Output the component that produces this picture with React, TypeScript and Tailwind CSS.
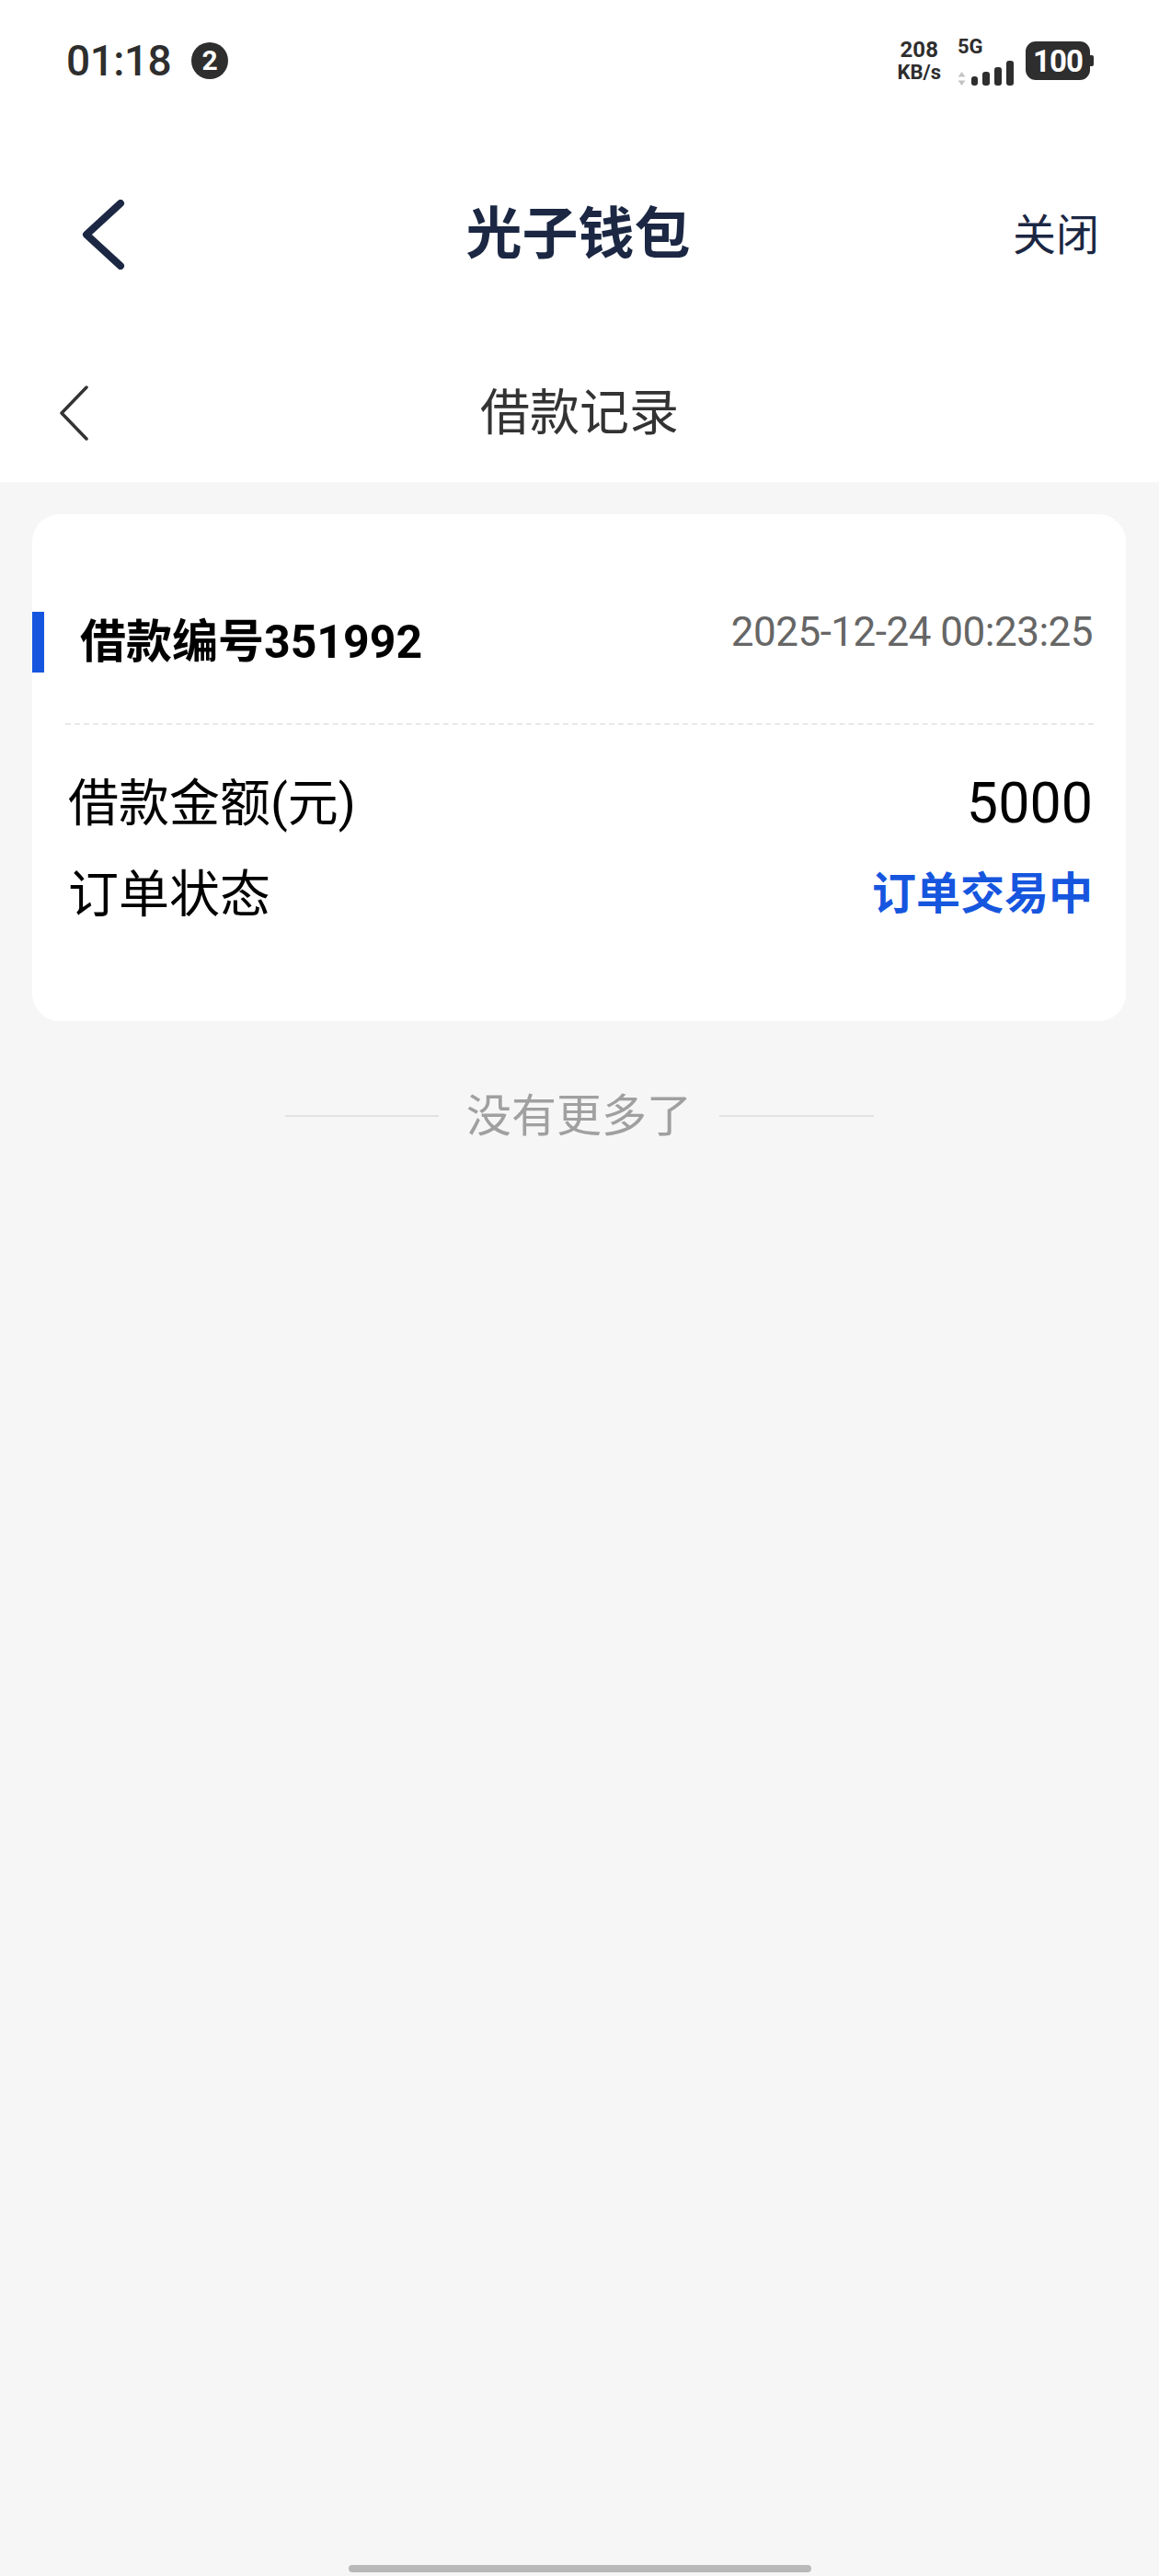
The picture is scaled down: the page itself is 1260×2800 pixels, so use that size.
import React from 'react';

const FONT = { fontFamily: 'Roboto, "Noto Sans CJK SC", sans-serif' };

function StatusBar() {
  return (
    <div className="h-[134px] flex items-center justify-between pl-[72px] pr-[71px] pb-[2px]">
      <div className="flex items-center gap-[22px]">
        <span className="text-[46px] font-medium leading-none text-[#2e2e2e] tracking-[-0.5px]">01:18</span>
        <span className="w-[40px] h-[40px] rounded-full bg-[#2e2e2e] text-white text-[30px] font-bold leading-none flex items-center justify-center">2</span>
      </div>
      <div className="flex items-center">
        <div className="flex flex-col items-center text-[#2e2e2e] font-bold leading-none">
          <span className="text-[24px]">208</span>
          <span className="text-[22px] mt-[2px]">KB/s</span>
        </div>
        <div className="flex flex-col ml-[18px]">
          <span className="text-[22px] font-bold leading-none text-[#2e2e2e]">5G</span>
          <div className="flex items-end mt-[4px] h-[27px]">
            <svg width="9" height="15" viewBox="0 0 9 15" className="mr-[6px]">
              <path d="M4.5 0 L8.5 5.5 H0.5 Z" fill="#c4c4c4" />
              <path d="M4.5 15 L8.5 9.5 H0.5 Z" fill="#c4c4c4" />
            </svg>
            <div className="flex items-end gap-[5px]">
              <div className="w-[7px] h-[10px] rounded-[3px] bg-[#2e2e2e]" />
              <div className="w-[8px] h-[15px] rounded-[3px] bg-[#2e2e2e]" />
              <div className="w-[8px] h-[20px] rounded-[3px] bg-[#2e2e2e]" />
              <div className="w-[8px] h-[27px] rounded-[3px] bg-[#2e2e2e]" />
            </div>
          </div>
        </div>
        <div className="flex items-center ml-[13px]">
          <div className="w-[70px] h-[42px] rounded-[11px] bg-[#2e2e2e] flex items-center justify-center">
            <span className="text-white text-[33px] font-bold leading-none tracking-[-1px]">100</span>
          </div>
          <div className="w-[4px] h-[12px] rounded-r-[2px] bg-[#2e2e2e]" />
        </div>
      </div>
    </div>
  );
}

export default function App() {
  return (
    <div style={FONT} className="min-h-[2800px] flex flex-col bg-[#f6f6f6]">
      <div className="bg-white">
        <StatusBar />

        <div className="h-[242px] flex items-center justify-between pl-[86px] pr-[65px]">
          <svg width="50" height="76" viewBox="0 0 50 76" className="shrink-0">
            <polyline points="45,4 8,38 45,72" fill="none" stroke="#1b2743" strokeWidth="8" strokeLinecap="round" strokeLinejoin="round" />
          </svg>
          <span className="text-[61px] font-bold leading-none text-[#1b2743] ml-[20px]">光子钱包</span>
          <span className="text-[47px] leading-none text-[#1b2743]">关闭</span>
        </div>

        <div className="h-[148px] relative flex items-center justify-center">
          <svg width="36" height="60" viewBox="0 0 36 60" className="absolute left-[62px] top-[43px]">
            <polyline points="32,2 5,30 32,58" fill="none" stroke="#333333" strokeWidth="3.5" strokeLinecap="round" strokeLinejoin="round" />
          </svg>
          <span className="text-[54px] leading-none text-[#333333]">借款记录</span>
        </div>
      </div>

      <div className="mt-[35px] ml-[35px] mr-[36px] bg-white rounded-[30px] pt-[106px] pb-[110px]">
        <div className="h-[66px] flex items-center">
          <div className="w-[13px] h-full bg-[#1656df]" />
          <span className="ml-[39px] text-[50px] font-bold leading-none text-black">借款编号351992</span>
          <span className="ml-auto mr-[36px] mb-[22px] text-[44px] leading-none text-[#666666] tracking-[-0.5px]">2025-12-24 00:23:25</span>
        </div>

        <div className="mt-[55px] ml-[36px] mr-[35px] border-t-2 border-dashed border-[#e8e8e8]" />

        <div className="mt-[57px] h-[56px] flex items-center justify-between pl-[39px] pr-[36px]">
          <span className="text-[55px] leading-none text-black">借款金额(元)</span>
          <span className="text-[61px] leading-none text-black">5000</span>
        </div>
        <div className="mt-[43px] h-[56px] flex items-center justify-between pl-[39px] pr-[36px]">
          <span className="text-[55px] leading-none text-black">订单状态</span>
          <span className="text-[48px] font-bold leading-none text-[#1656df]">订单交易中</span>
        </div>
      </div>

      <div className="mt-[78px] h-[50px] flex items-center justify-center">
        <div className="w-[167px] h-[2px] bg-[#e2e2e2]" />
        <span className="mx-[30px] text-[49px] leading-none text-[#a0a0a0]">没有更多了</span>
        <div className="w-[168px] h-[2px] bg-[#e2e2e2]" />
      </div>

      <div className="grow" />
      <div className="flex justify-center pb-[4px]">
        <div className="w-[503px] h-[8px] rounded-full bg-[#b9b9b9]" />
      </div>
    </div>
  );
}
